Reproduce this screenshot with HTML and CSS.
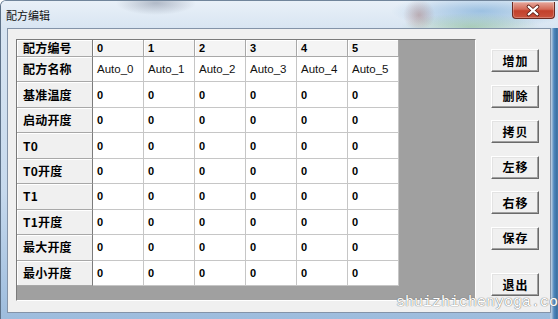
FILE: index.html
```html
<!DOCTYPE html>
<html lang="zh">
<head>
<meta charset="utf-8">
<title>配方编辑</title>
<link rel="stylesheet" href="styles.css">
</head>
<body>
<div class="window">
  <div class="titlebar">
    <span class="title">配方编辑</span>
    <div class="close">
      <svg width="43" height="17" viewBox="0 0 43 17">
        <path d="M17 4.5 L26 12.5 M26 4.5 L17 12.5" stroke="#5a1a12" stroke-width="4" stroke-linecap="round"/>
        <path d="M17 4.5 L26 12.5 M26 4.5 L17 12.5" stroke="#ffffff" stroke-width="2.2" stroke-linecap="round"/>
      </svg>
    </div>
  </div>
  <div class="client">
    <div class="grid">
      <table class="recipe">
        <thead>
          <tr class="head-row">
            <th class="label">配方编号</th>
            <th>0</th><th>1</th><th>2</th><th>3</th><th>4</th><th>5</th>
          </tr>
        </thead>
        <tbody>
          <tr>
            <th class="label">配方名称</th>
            <td class="name">Auto_0</td><td class="name">Auto_1</td><td class="name">Auto_2</td><td class="name">Auto_3</td><td class="name">Auto_4</td><td class="name">Auto_5</td>
          </tr>
          <tr>
            <th class="label">基准温度</th>
            <td>0</td><td>0</td><td>0</td><td>0</td><td>0</td><td>0</td>
          </tr>
          <tr>
            <th class="label">启动开度</th>
            <td>0</td><td>0</td><td>0</td><td>0</td><td>0</td><td>0</td>
          </tr>
          <tr>
            <th class="label">T0</th>
            <td>0</td><td>0</td><td>0</td><td>0</td><td>0</td><td>0</td>
          </tr>
          <tr>
            <th class="label">T0开度</th>
            <td>0</td><td>0</td><td>0</td><td>0</td><td>0</td><td>0</td>
          </tr>
          <tr>
            <th class="label">T1</th>
            <td>0</td><td>0</td><td>0</td><td>0</td><td>0</td><td>0</td>
          </tr>
          <tr>
            <th class="label">T1开度</th>
            <td>0</td><td>0</td><td>0</td><td>0</td><td>0</td><td>0</td>
          </tr>
          <tr>
            <th class="label">最大开度</th>
            <td>0</td><td>0</td><td>0</td><td>0</td><td>0</td><td>0</td>
          </tr>
          <tr>
            <th class="label">最小开度</th>
            <td>0</td><td>0</td><td>0</td><td>0</td><td>0</td><td>0</td>
          </tr>
        </tbody>
      </table>
    </div>
    <div class="buttons">
      <button class="btn">增加</button>
      <button class="btn">删除</button>
      <button class="btn">拷贝</button>
      <button class="btn">左移</button>
      <button class="btn">右移</button>
      <button class="btn">保存</button>
      <button class="btn btn-exit">退出</button>
    </div>
  </div>
  <div class="watermark">shuizhichenyoga.co</div>
</div>
</body>
</html>
```

FILE: styles.css
```css
html, body {
  margin: 0;
  padding: 0;
}

body {
  width: 558px;
  height: 319px;
  overflow: hidden;
  background: #ffffff;
  font-family: "Liberation Sans", "Noto Sans CJK SC", sans-serif;
}

.window {
  position: relative;
  width: 558px;
  height: 319px;
  box-sizing: border-box;
  border-left: 1px solid #5d7188;
  border-top: 1px solid #71859b;
  border-radius: 6px 0 0 0;
  display: flex;
  flex-direction: column;
  overflow: hidden;
  background:
    linear-gradient(to right, rgba(0,0,0,0) 0, rgba(0,0,0,0) 549px, #c4d4e4 550px, #4d86bd 553px, #3b6f9f 556px, #5e8fbf 558px),
    linear-gradient(to bottom, #dbe7f3 0, #c6d9ed 60%, #9dbcdd 100%);
}

.titlebar {
  height: 27px;
  flex: none;
  display: flex;
  align-items: flex-start;
  justify-content: space-between;
  padding-left: 5px;
  background:
    radial-gradient(ellipse 40px 12px at 155px 2px, rgba(110,120,140,0.45), rgba(110,120,140,0)),
    radial-gradient(ellipse 16px 16px at 418px 14px, rgba(150,80,70,0.35), rgba(150,80,70,0)),
    radial-gradient(ellipse 70px 14px at 470px 26px, rgba(120,180,120,0.45), rgba(120,180,120,0)),
    radial-gradient(ellipse 90px 18px at 480px 10px, rgba(70,140,200,0.45), rgba(70,140,200,0)),
    linear-gradient(to bottom, #e9f0f8, #d8e5f2);
}

.title {
  margin-top: 8px;
  font-family: "Noto Sans CJK SC", sans-serif;
  font-size: 11px;
  line-height: 12px;
  color: #111;
}

.close {
  margin-top: 1px;
  margin-right: 3px;
  width: 43px;
  height: 17px;
  box-sizing: border-box;
  border: 1px solid #6b2a22;
  border-top: none;
  border-radius: 0 0 4px 4px;
  background: linear-gradient(to bottom, #e5a89d 0, #d46a58 45%, #c2402b 55%, #c9533d 100%);
  box-shadow: inset 0 0 0 1px rgba(255,255,255,0.25);
  display: flex;
}

.close svg {
  display: block;
  margin-left: -1px;
}

.client {
  flex: none;
  margin: 0 7px 0 6px;
  height: 285px;
  box-sizing: border-box;
  border: 1px solid #8393a8;
  background: #f0f0f0;
  display: flex;
  gap: 15px;
  padding: 10px 11px 10px 8px;
}

.grid {
  width: 460px;
  height: 262px;
  flex: none;
  box-sizing: border-box;
  border: 1px solid;
  border-color: #7a7a7a #ffffff #ffffff #7a7a7a;
  background: #a0a0a0;
  overflow: hidden;
}

.recipe {
  border-collapse: separate;
  border-spacing: 0;
  table-layout: fixed;
  width: 382px;
}

.recipe th,
.recipe td {
  box-sizing: border-box;
  width: 51px;
  height: 25.44px;
  padding: 0 0 0 4px;
  text-align: left;
  vertical-align: middle;
  white-space: nowrap;
  overflow: hidden;
  border-right: 1px solid #c6c6c6;
  border-bottom: 1px solid #c6c6c6;
  font-size: 11px;
  font-weight: bold;
  color: #000;
  line-height: 12px;
}

.recipe td {
  background: #ffffff;
}

.recipe .head-row th {
  height: 17px;
  background: #f4f4f4;
  border-right: 1px solid #a8a8a8;
  border-bottom: 1px solid #a8a8a8;
  box-shadow: inset 1px 1px 0 #ffffff;
}

.recipe th.label {
  width: 76px;
  padding-left: 6px;
  background: #f0f0f0;
  border-right: 1px solid #7c7c7c;
  border-bottom: 1px solid #a8a8a8;
  box-shadow: inset 1px 1px 0 #ffffff;
  font-family: "Noto Sans CJK SC", sans-serif;
  font-size: 12px;
  font-weight: bold;
  letter-spacing: 0.2px;
}

.recipe td.name {
  font-weight: normal;
  font-size: 11.5px;
  color: #111;
}

.buttons {
  width: 48px;
  flex: none;
  display: flex;
  flex-direction: column;
  gap: 12.5px;
  padding-top: 10px;
}

.btn {
  width: 48px;
  height: 23px;
  box-sizing: border-box;
  padding: 0;
  margin: 0;
  background: #f0f0f0;
  border: 1px solid;
  border-color: #ffffff #6a6a6a #6a6a6a #ffffff;
  box-shadow: inset -1px -1px 0 #a0a0a0, inset 1px 1px 0 #e3e3e3;
  font-family: "Noto Sans CJK SC", sans-serif;
  font-size: 12px;
  font-weight: bold;
  letter-spacing: 1px;
  text-indent: 1px;
  color: #000;
  line-height: 20px;
}

.btn-exit {
  margin-top: 11px;
}

.watermark {
  position: absolute;
  left: 395px;
  top: 294px;
  font-family: "Liberation Mono", monospace;
  font-size: 15px;
  line-height: 16px;
  color: #ffffff;
  text-shadow: 0 0 1px #707070, 0 0 1px #707070;
  white-space: nowrap;
}
```
